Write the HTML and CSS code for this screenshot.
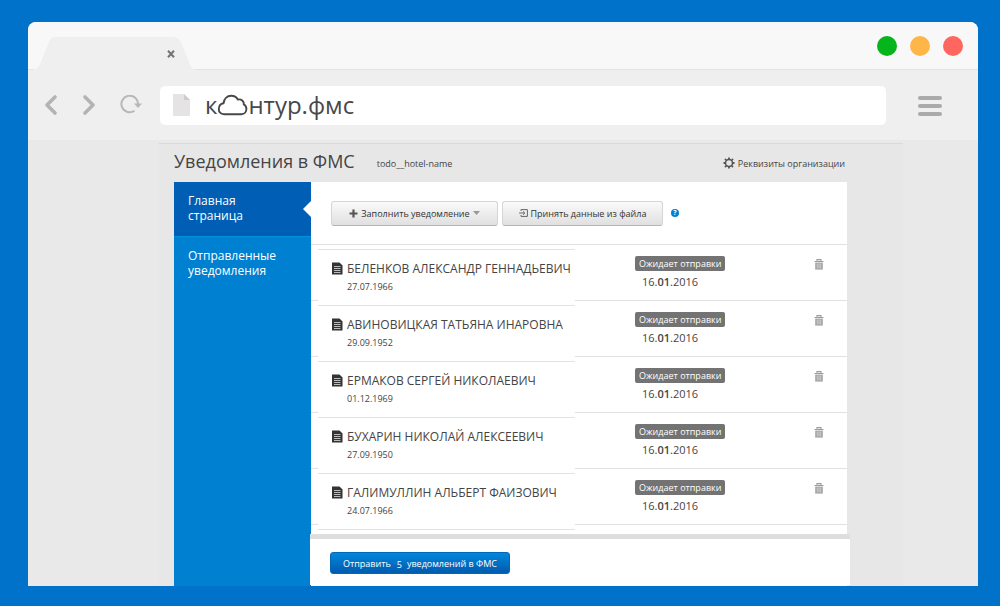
FILE: index.html
```html
<!DOCTYPE html>
<html lang="ru">
<head>
<meta charset="utf-8">
<title>Контур.ФМС</title>
<link rel="stylesheet" href="styles.css">
</head>
<body>
<svg class="sprite" aria-hidden="true">
  <symbol id="doc" viewBox="0 0 11 13"><path d="M0 .5H7.500L10.500 3.500V12.500H0z" fill="#333"/><path d="M2 4.500H8.500M2 6.500H8.500M2 8.500H8.500M2 10.500H8.500" stroke="#bbb" stroke-width="1"/></symbol>
  <symbol id="trash" viewBox="0 0 10 11"><path d="M3 1.800V.6H7V1.800M.5 2.500H9.500" fill="none" stroke="#999" stroke-width="1.200"/><path d="M1.200 3.600H8.800V10.600H1.200z" fill="#a3a3a3"/><path d="M3.300 4.500V9.500M5 4.500V9.500M6.700 4.500V9.500" stroke="#ddd" stroke-width=".7"/></symbol>
</svg>
<div class="window">
  <div class="tabs">
    <div class="tab">
      <svg class="tab-shape" viewBox="0 0 168 34" preserveAspectRatio="none" aria-hidden="true"><path d="M0 34C6 33 7 31 9 26L17 6C19 1 21 0 26 0H143C148 0 151 2 153 6L161 26C163 31 164 33 168 34z" fill="#efefef"/></svg>
      <button class="tab-close" aria-label="Закрыть вкладку"><svg width="8" height="8" viewBox="0 0 8 8"><path d="M1 .8L7 7.200M7 .8L1 7.200" stroke="#747474" stroke-width="2"/></svg></button>
    </div>
    <div class="lights">
      <button class="light green" aria-label="Развернуть"></button>
      <button class="light amber" aria-label="Свернуть"></button>
      <button class="light red" aria-label="Закрыть"></button>
    </div>
  </div>
  <div class="navbar">
    <div class="nav-buttons">
      <button class="plain" aria-label="Назад"><svg width="14" height="22" viewBox="0 0 14 22"><path d="M11 3L3 11L11 19" fill="none" stroke="#b3b3b3" stroke-width="3.600" stroke-linecap="round" stroke-linejoin="round"/></svg></button>
      <button class="plain" aria-label="Вперёд"><svg width="14" height="22" viewBox="0 0 14 22"><path d="M3 3L11 11L3 19" fill="none" stroke="#b3b3b3" stroke-width="3.600" stroke-linecap="round" stroke-linejoin="round"/></svg></button>
      <button class="plain" aria-label="Обновить"><svg width="22" height="20" viewBox="0 0 22 20"><path d="M14.500 15.800A8.300 8.300 0 1 1 18 9.500" fill="none" stroke="#b8b8b8" stroke-width="2"/><path d="M14 8.500H22L18 13z" fill="#b8b8b8"/></svg></button>
    </div>
    <div class="address">
      <svg width="17" height="22" viewBox="0 0 17 22" aria-hidden="true"><path d="M0 0H11L17 6V22H0z" fill="#e6e3e4"/><path d="M11 0L17 6H11z" fill="#cfcccd"/></svg>
      <div class="logo"><span>к</span><svg width="31" height="22" viewBox="0 0 31 22" aria-hidden="true"><path d="M7 20.200C3.500 20.200 1.800 17.800 1.800 15.200C1.800 12 3.500 9.800 6.500 9.300C7 5 10 1.800 14.200 1.800C17 1.800 19.500 3.200 20.800 5.500C24.500 4.800 27 7.300 26.800 10.400C28.500 11.300 29.400 13 29.400 15C29.400 18 27.500 20.200 24.500 20.200z" fill="none" stroke="#484848" stroke-width="1.900"/></svg><span>нтур.фмс</span></div>
    </div>
    <button class="plain" aria-label="Меню"><svg width="24" height="24" viewBox="0 0 24 24"><path d="M2 5H22M2 13H22M2 21H22" stroke="#aaa" stroke-width="4" stroke-linecap="round"/></svg></button>
  </div>
  <div class="viewport">
    <div class="page">
      <header class="head">
        <h1>Уведомления в ФМС</h1>
        <span class="hotel">todo__hotel-name</span>
        <a class="org" href="#"><svg width="12" height="12" viewBox="0 0 12 12" aria-hidden="true"><circle cx="6" cy="6" r="3.500" fill="none" stroke="#555" stroke-width="1.500"/><path d="M6 .5V2M6 10V11.500M.5 6H2M10 6H11.500M2 2L3.200 3.200M8.800 8.800L10 10M10 2L8.800 3.200M3.200 8.800L2 10" stroke="#555" stroke-width="1.800"/></svg>Реквизиты организации</a>
      </header>
      <div class="app">
        <nav class="side">
          <a class="active" href="#">Главная страница</a>
          <a href="#">Отправленные уведомления</a>
        </nav>
        <main class="main">
          <div class="actions">
            <button class="btn wide"><svg width="9" height="9" viewBox="0 0 9 9" aria-hidden="true"><path d="M4.500 .5V8.500M.5 4.500H8.500" stroke="#555" stroke-width="2.200"/></svg>Заполнить уведомление<svg width="7" height="4" viewBox="0 0 7 4" aria-hidden="true"><path d="M0 0H7L3.500 4z" fill="#999"/></svg></button>
            <button class="btn"><svg width="9" height="8" viewBox="0 0 9 8" aria-hidden="true"><path d="M2 2V.6H8.400V7.400H2V6M0 4H5.500M4 2.300L5.800 4L4 5.700" fill="none" stroke="#666" stroke-width="1"/></svg>Принять данные из файла</button>
            <button class="help" aria-label="Справка">?</button>
          </div>
          <ul class="list">
            <li><div class="person"><svg class="doc"><use href="#doc"/></svg><div><div class="name">БЕЛЕНКОВ АЛЕКСАНДР ГЕННАДЬЕВИЧ</div><div class="birth">27.07.1966</div></div></div><div class="state"><span class="badge">Ожидает отправки</span><div class="date">16.<b>01</b>.2016</div></div><button class="plain del" aria-label="Удалить"><svg class="trash"><use href="#trash"/></svg></button></li>
            <li><div class="person"><svg class="doc"><use href="#doc"/></svg><div><div class="name">АВИНОВИЦКАЯ ТАТЬЯНА ИНАРОВНА</div><div class="birth">29.09.1952</div></div></div><div class="state"><span class="badge">Ожидает отправки</span><div class="date">16.<b>01</b>.2016</div></div><button class="plain del" aria-label="Удалить"><svg class="trash"><use href="#trash"/></svg></button></li>
            <li><div class="person"><svg class="doc"><use href="#doc"/></svg><div><div class="name">ЕРМАКОВ СЕРГЕЙ НИКОЛАЕВИЧ</div><div class="birth">01.12.1969</div></div></div><div class="state"><span class="badge">Ожидает отправки</span><div class="date">16.<b>01</b>.2016</div></div><button class="plain del" aria-label="Удалить"><svg class="trash"><use href="#trash"/></svg></button></li>
            <li><div class="person"><svg class="doc"><use href="#doc"/></svg><div><div class="name">БУХАРИН НИКОЛАЙ АЛЕКСЕЕВИЧ</div><div class="birth">27.09.1950</div></div></div><div class="state"><span class="badge">Ожидает отправки</span><div class="date">16.<b>01</b>.2016</div></div><button class="plain del" aria-label="Удалить"><svg class="trash"><use href="#trash"/></svg></button></li>
            <li><div class="person"><svg class="doc"><use href="#doc"/></svg><div><div class="name">ГАЛИМУЛЛИН АЛЬБЕРТ ФАИЗОВИЧ</div><div class="birth">24.07.1966</div></div></div><div class="state"><span class="badge">Ожидает отправки</span><div class="date">16.<b>01</b>.2016</div></div><button class="plain del" aria-label="Удалить"><svg class="trash"><use href="#trash"/></svg></button></li>
          </ul>
          <div class="submit"><button class="send"><span>Отправить</span><span class="count">5</span><span>уведомлений в ФМС</span></button></div>
        </main>
      </div>
    </div>
  </div>
</div>
</body>
</html>
```
FILE: styles.css
```css
* { box-sizing: border-box; }
body {
  margin: 0;
  min-height: 100vh;
  padding: 22px 22px 20px 28px;
  display: flex;
  background: #0072c9;
  color: #444;
  font-family: "Open Sans", "Noto Sans", sans-serif;
  font-size: 11px;
}
button { font: inherit; color: inherit; cursor: pointer; }
a { color: inherit; text-decoration: none; }
svg { display: block; flex: none; }
.sprite { position: absolute; width: 0; height: 0; }
.plain { display: block; padding: 0; border: 0; background: none; }

.window { flex: 1; display: flex; flex-direction: column; border-radius: 8px 8px 0 0; overflow: hidden; background: #efefef; }
.tabs { display: flex; justify-content: space-between; align-items: flex-end; height: 48px; padding: 0 15px 0 4px; background: #f8f8f8; border-bottom: 1px solid #d8e8f0; }
.tab { display: flex; justify-content: flex-end; align-items: center; width: 164px; height: 33px; margin-bottom: -1px; padding-right: 21px; position: relative; }
.tab-shape { position: absolute; inset: 0; width: 100%; height: 100%; }
.tab-close { position: relative; padding: 0; border: 0; background: none; }
.lights { display: flex; gap: 13px; align-self: center; }
.light { width: 20px; height: 20px; padding: 0; border: 0; border-radius: 50%; }
.green { background: #06b41c; }
.amber { background: #ffb648; }
.red { background: #ff665f; }

.navbar { display: flex; align-items: center; gap: 32px; height: 70px; padding: 0 36px 0 16px; }
.nav-buttons { display: flex; align-items: center; gap: 24px; width: 84px; }
.address { flex: 1; display: flex; align-items: center; gap: 15px; height: 39px; padding: 0 13px; border-radius: 5px; background: #fff; }
.logo { display: flex; align-items: center; color: #484848; font-size: 24px; line-height: 32px; }

.viewport { flex: 1; display: flex; padding: 0 75px 0 131px; background: #e9e9e9; }
.page { flex: 1; display: flex; flex-direction: column; margin-top: 3px; padding: 0 56px 0 15px; border-top: 1px solid #dadada; background: #e7e7e7; }
.head { display: flex; align-items: center; height: 38px; padding: 0 2px 0 0; }
h1 { margin: 0; font-size: 18px; line-height: 34px; height: 38px; font-weight: 400; }
.hotel { margin-left: 22px; font-size: 9px; }
.org { display: flex; align-items: center; gap: 3px; margin-left: auto; font-size: 9px; }

.app { flex: 1; display: flex; background: #0080d0; }
.side { width: 137px; color: #fff; font-size: 12px; line-height: 15px; }
.side a { display: block; position: relative; padding: 11px 36px 13px 14px; }
.side .active { background: #005eb5; border-bottom: 1px solid #0090dc; }
.side .active::after { content: ""; position: absolute; right: 0; top: 19px; border: 8px solid transparent; border-left-width: 0; border-right-color: #fff; }
.main { flex: 1; display: flex; flex-direction: column; background: #fff; }
.actions { display: flex; align-items: center; gap: 4px; height: 63px; padding-left: 20px; border-bottom: 1px solid #e2e2e2; }
.btn { display: flex; align-items: center; justify-content: center; gap: 3px; width: 161px; height: 25px; padding: 0; border: 1px solid #d5d5d5; border-bottom-color: #b5b5b5; border-radius: 3px; background: linear-gradient(#fafafa, #e0e0e0); color: #333; font-size: 9px; }
.btn.wide { width: 167px; }
.help { width: 8px; height: 8px; margin-left: 4px; padding: 0; border: 0; border-radius: 50%; background: #0080d0; color: #fff; font-size: 7px; line-height: 8px; font-weight: 700; }

.list { flex: 1; margin: 0; padding: 0 0 8px; list-style: none; }
.list li { display: flex; align-items: flex-start; height: 56px; padding: 0 23px 0 7px; border-bottom: 1px solid #e2e2e2; }
.person { display: flex; gap: 4px; width: 257px; height: 57px; margin-top: 4px; padding: 11px 0 0 14px; border-top: 1px solid #e2e2e2; border-bottom: 1px solid #e2e2e2; background: #fff; }
.doc { width: 11px; height: 13px; margin-top: 1px; }
.name { font-size: 12px; line-height: 16px; white-space: nowrap; }
.birth { margin-top: 3px; font-size: 9px; line-height: 14px; }
.state { margin: 11px 0 0 60px; }
.badge { display: block; padding: 0 4px; border-radius: 2px; background: #737373; color: #fff; font-size: 9px; line-height: 15px; }
.date { margin-top: 3px; padding-left: 7px; font-size: 11px; line-height: 16px; }
.date b { font-weight: 600; }
.del { margin: 14px 0 0 auto; }
.trash { width: 10px; height: 11px; }

.submit { margin: 0 -3px 1px -1px; padding: 13px 20px 11px; border-top: 5px solid #dedede; background: #fff; }
.send { display: flex; align-items: center; justify-content: center; width: 180px; height: 22px; padding: 0; border: 1px solid #0068b8; border-radius: 3px; background: linear-gradient(#0087dc, #005bae); color: #fff; font-size: 9px; }
.count { margin: 2px 5px 0 6px; }
```
